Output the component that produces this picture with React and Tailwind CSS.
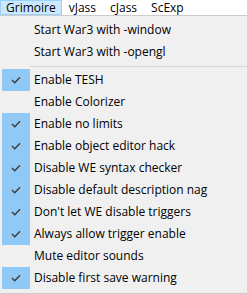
import React from 'react'

const items = [
  { label: 'Enable TESH', checked: true },
  { label: 'Enable Colorizer', checked: false },
  { label: 'Enable no limits', checked: true },
  { label: 'Enable object editor hack', checked: true },
  { label: 'Disable WE syntax checker', checked: true },
  { label: 'Disable default description nag', checked: true },
  { label: "Don't let WE disable triggers", checked: true },
  { label: 'Always allow trigger enable', checked: true },
  { label: 'Mute editor sounds', checked: false },
  { label: 'Disable first save warning', checked: true },
]

function Check() {
  return (
    <svg width="10" height="8" viewBox="0 0 10 8" className="block">
      <path d="M1 4 L3.8 6.8 L9 1.2" fill="none" stroke="#3c3c3c" strokeWidth="1.4" />
    </svg>
  )
}

function Row({ label, checked }) {
  return (
    <div className="flex h-[22px] items-center">
      <div className={`ml-[2px] flex h-full w-[28px] items-center justify-center ${checked ? 'bg-[#90c8f6]' : ''}`}>
        {checked && <Check />}
      </div>
      <span className="ml-[4px] whitespace-nowrap">{label}</span>
    </div>
  )
}

export default function App() {
  return (
    <div className="h-[294px] w-[247px] overflow-hidden bg-white text-[12px] leading-none text-black" style={{ fontFamily: '"Open Sans", "Noto Sans", sans-serif' }}>
      <div className="flex h-[15px] items-stretch border-b border-[#cccccc] bg-white box-content">
        <div className="flex items-center border border-[#99d1ff] bg-[#cce8ff] px-[5px]">Grimoire</div>
        <div className="flex items-center px-[7px]">vJass</div>
        <div className="flex items-center px-[7px]">cJass</div>
        <div className="flex items-center px-[7px]">ScExp</div>
      </div>
      <div className="border-b border-[#cccccc] bg-[#f0f0f0] pb-[4px] pt-[3px]">
        <Row label="Start War3 with -window" checked={false} />
        <Row label="Start War3 with -opengl" checked={false} />
        <div className="flex h-[6px] items-center pl-[30px]">
          <div className="h-px w-full bg-[#d7d7d7]" />
        </div>
        {items.map((it) => (
          <Row key={it.label} {...it} />
        ))}
      </div>
    </div>
  )
}
